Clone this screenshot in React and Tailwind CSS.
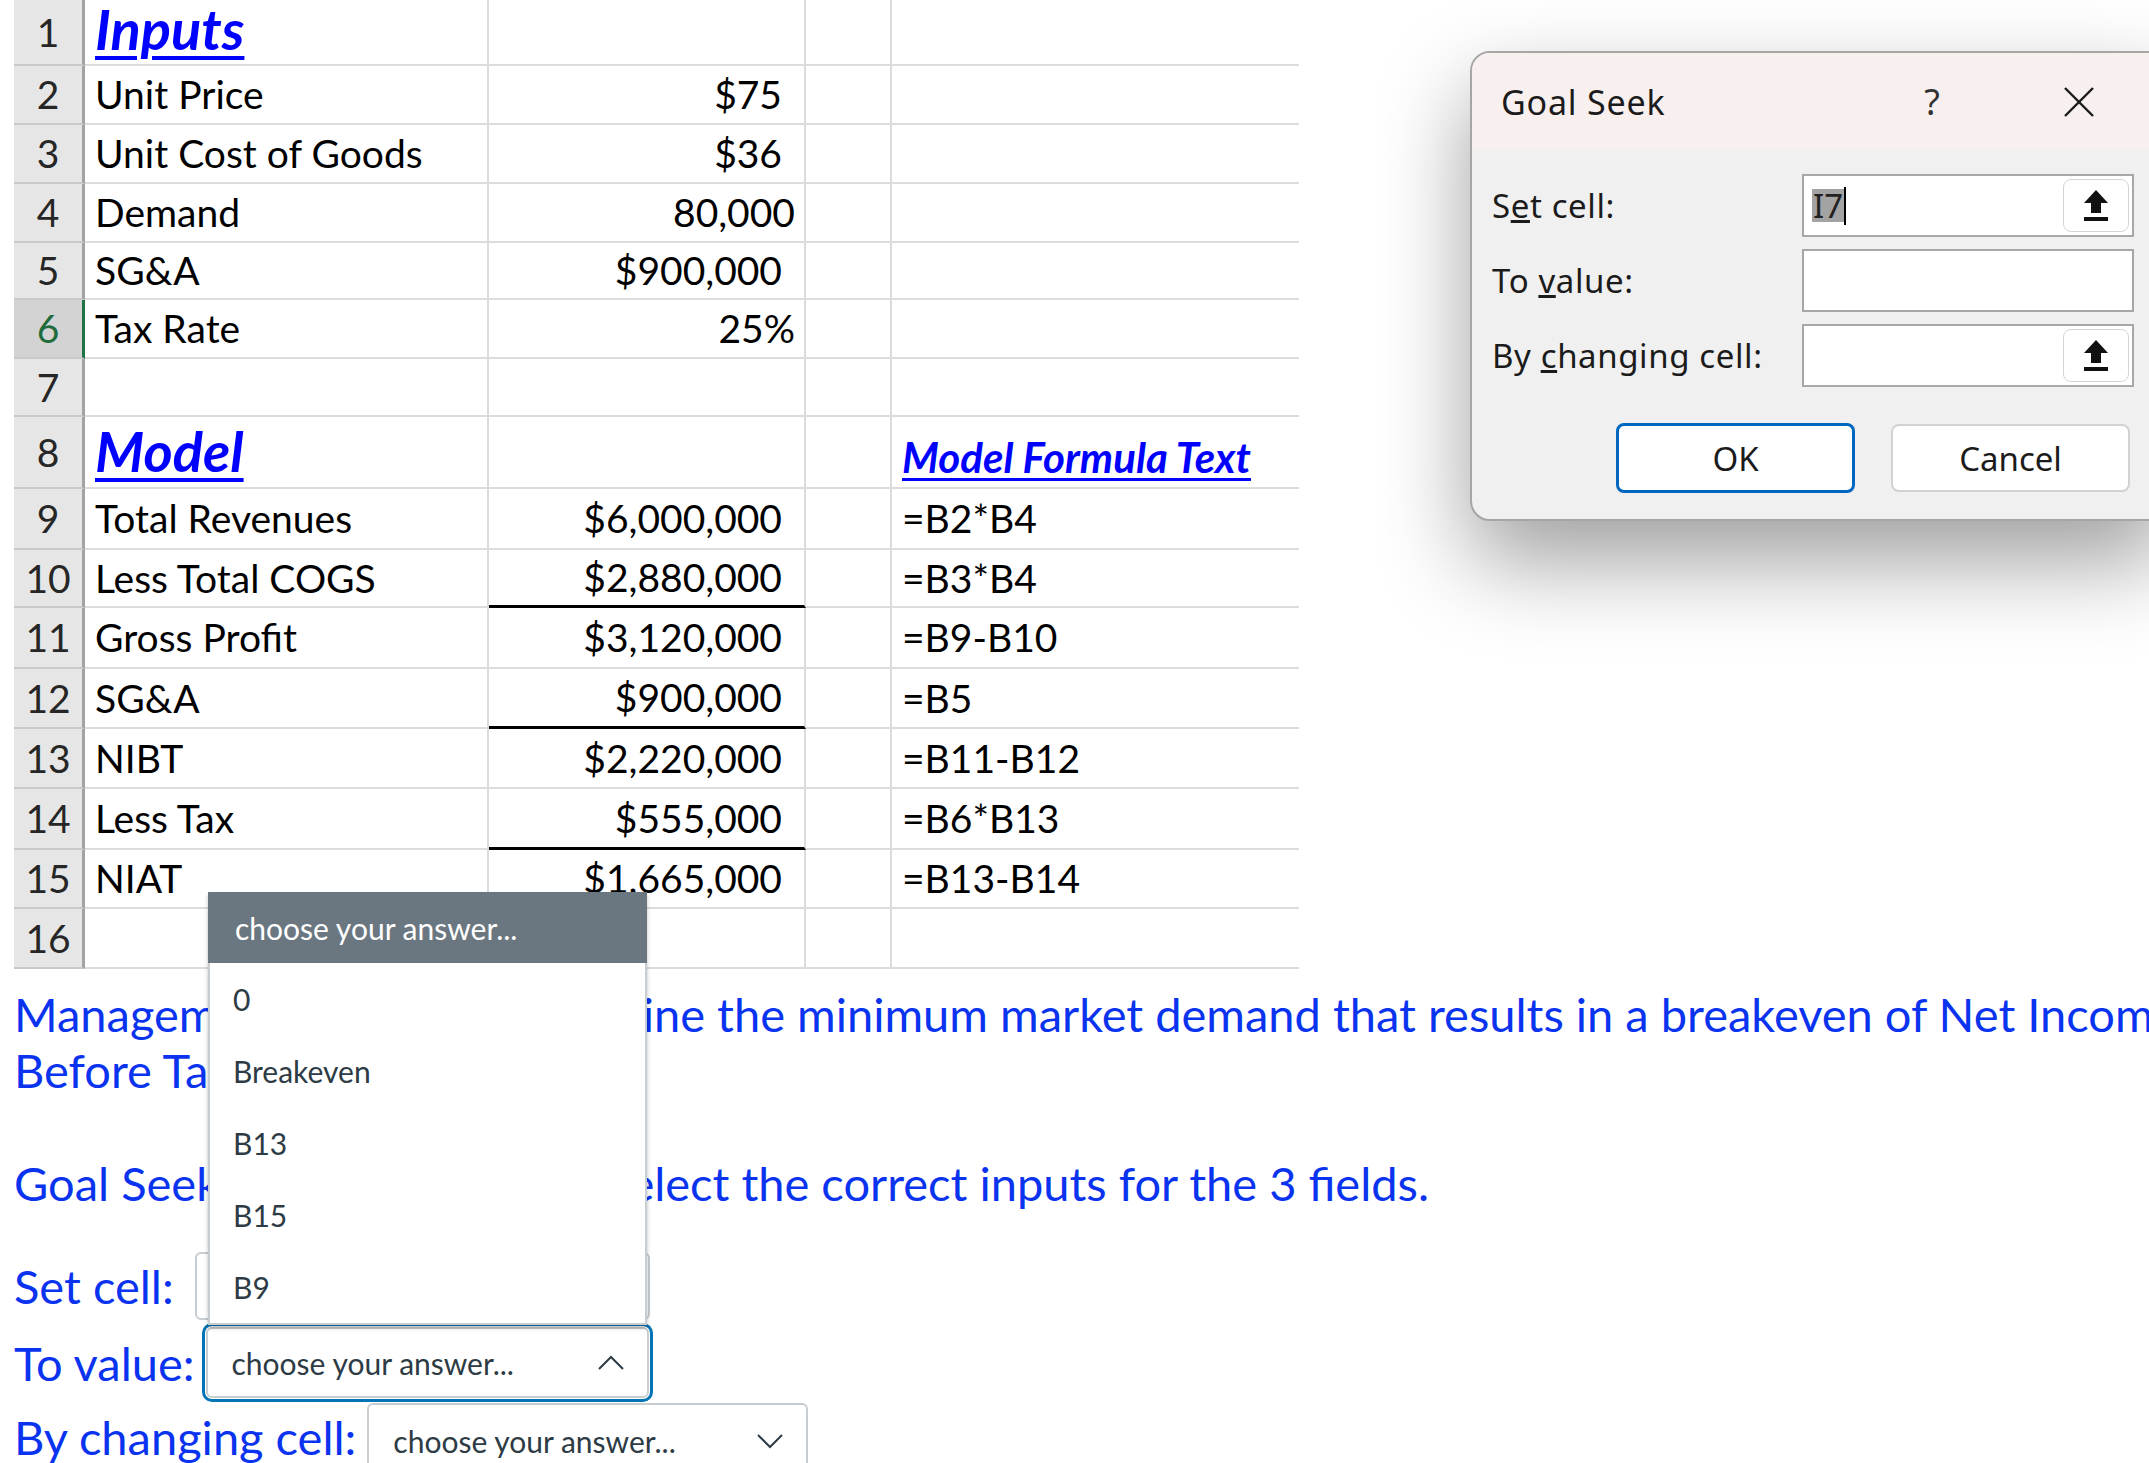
import React from "react";

const rows = [
  { n: 1, h: "h-[66px]", a: "Inputs", head: true },
  { n: 2, h: "h-[59px]", a: "Unit Price", b: "$75", acc: true },
  { n: 3, h: "h-[59px]", a: "Unit Cost of Goods", b: "$36", acc: true },
  { n: 4, h: "h-[59px]", a: "Demand", b: "80,000" },
  { n: 5, h: "h-[57px]", a: "SG&A", b: "$900,000", acc: true },
  { n: 6, h: "h-[59px]", a: "Tax Rate", b: "25%", sel: true },
  { n: 7, h: "h-[58px]" },
  { n: 8, h: "h-[72px]", a: "Model", head: true, d: "Model Formula Text", dhead: true },
  { n: 9, h: "h-[61px]", a: "Total Revenues", b: "$6,000,000", acc: true, d: "=B2*B4" },
  { n: 10, h: "h-[58px]", a: "Less Total COGS", b: "$2,880,000", acc: true, d: "=B3*B4", thick: true },
  { n: 11, h: "h-[61px]", a: "Gross Profit", b: "$3,120,000", acc: true, d: "=B9-B10" },
  { n: 12, h: "h-[60px]", a: "SG&A", b: "$900,000", acc: true, d: "=B5", thick: true },
  { n: 13, h: "h-[60px]", a: "NIBT", b: "$2,220,000", acc: true, d: "=B11-B12" },
  { n: 14, h: "h-[61px]", a: "Less Tax", b: "$555,000", acc: true, d: "=B6*B13", thick: true },
  { n: 15, h: "h-[59px]", a: "NIAT", b: "$1,665,000", acc: true, d: "=B13-B14" },
  { n: 16, h: "h-[60px]" },
];

function Sheet() {
  return (
    <div className="grid grid-cols-[71px_404px_317px_86px_407px] text-[39px] leading-none text-black">
      {rows.map((r) => (
        <React.Fragment key={r.n}>
          <div
            className={`${r.h} flex items-center justify-center border-b-2 border-b-[#c9c9c9] border-r-[3px] text-[39px] ${
              r.sel ? "bg-[#d3d3d3] text-[#1e6b3b] border-r-[#217346]" : "bg-[#e6e6e6] text-[#262626] border-r-[#a3a3a3]"
            }`}
          >
            {r.n}
          </div>
          <div
            className={`${r.h} flex border-b-2 border-r-2 border-[#dcdcdc] pl-[10px] ${
              r.head ? (r.n === 1 ? "items-start pt-[1px]" : "items-start pt-[6px]") : "items-center"
            }`}
          >
            {r.head ? (
              <span className="text-[56px] font-bold italic underline decoration-[4px] underline-offset-[6px] text-[#0000ff]">
                {r.a}
              </span>
            ) : (
              <span>{r.a}</span>
            )}
          </div>
          <div
            className={`${r.h} flex items-center justify-end border-r-2 border-r-[#dcdcdc] ${
              r.thick ? "border-b-[3px] border-b-black" : "border-b-2 border-b-[#dcdcdc]"
            } ${r.acc ? "pr-[22px]" : "pr-[9px]"}`}
          >
            {r.b}
          </div>
          <div className={`${r.h} border-b-2 border-r-2 border-[#dcdcdc]`} />
          <div
            className={`${r.h} flex border-b-2 border-[#dcdcdc] pl-[10px] ${
              r.dhead ? "items-start pt-[19px]" : "items-center"
            }`}
          >
            {r.dhead ? (
              <span className="text-[42px] font-bold italic underline decoration-[3px] underline-offset-[5px] text-[#0000ff]">
                {r.d}
              </span>
            ) : (
              <span>{r.d}</span>
            )}
          </div>
        </React.Fragment>
      ))}
    </div>
  );
}

function Chevron({ up }) {
  return (
    <svg width="28" height="16" viewBox="0 0 28 16" fill="none" stroke="#2d3b45" strokeWidth="2">
      {up ? <polyline points="2,14 14,2 26,14" /> : <polyline points="2,2 14,14 26,2" />}
    </svg>
  );
}

function SelectBox({ up, cls }) {
  return (
    <div
      className={`flex items-center justify-between rounded-[6px] border-2 border-[#c7cdd1] bg-white pl-[24px] pr-[22px] text-[30px] leading-none text-[#2d3b45] ${cls}`}
    >
      <span>choose your answer...</span>
      <Chevron up={up} />
    </div>
  );
}

function UpArrow() {
  return (
    <svg width="30" height="36" viewBox="0 0 30 36">
      <path d="M15 2 L3 15 H10 V25 H20 V15 H27 Z" fill="#111" />
      <rect x="3" y="29" width="24" height="4" fill="#111" />
    </svg>
  );
}

function RefButton() {
  return (
    <div className="my-[3px] mr-[3px] ml-auto flex w-[66px] items-center justify-center rounded-[8px] border border-[#d4d4d4] bg-white">
      <UpArrow />
    </div>
  );
}

function Dialog() {
  return (
    <div className="absolute left-[1377px] top-0 h-[720px] w-[772px] overflow-hidden">
      <div className="ml-[93px] mt-[51px] flex h-[470px] w-[700px] flex-col overflow-hidden rounded-[20px] border-2 border-[#a6a6a6] bg-[#f0f0f0] shadow-[0_40px_90px_rgba(0,0,0,0.38)] [font-family:'Noto_Sans',sans-serif] text-[33px] leading-none text-[#1b1b1b]">
        <div className="flex h-[97px] items-center bg-[#f8f0ef] pl-[29px]">
          <span className="tracking-[0.8px] text-[34px]">Goal Seek</span>
          <span className="ml-auto flex w-[40px] justify-center text-[36px] text-[#333]">?</span>
          <span className="ml-[107px] mr-[69px] flex w-[40px] justify-center">
            <svg width="32" height="32" viewBox="0 0 32 32" stroke="#1b1b1b" strokeWidth="2.4">
              <line x1="2" y1="2" x2="30" y2="30" />
              <line x1="30" y1="2" x2="2" y2="30" />
            </svg>
          </span>
        </div>
        <div className="pt-[24px] pl-[20px]">
          <div className="grid grid-cols-[310px_332px] gap-y-[12px]">
            <div className="flex h-[63px] items-center tracking-[0.6px]">
              <span>
                S<u>e</u>t cell:
              </span>
            </div>
            <div className="flex h-[63px] border-2 border-[#a7a7a7] bg-white">
              <div className="flex items-center pl-[8px]">
                <span className="bg-[#a3a3a3] px-[1px] text-[33px] text-[#222]">I7</span>
                <span className="h-[38px] w-[2px] bg-black" />
              </div>
              <RefButton />
            </div>
            <div className="flex h-[63px] items-center tracking-[0.6px]">
              <span>
                To <u>v</u>alue:
              </span>
            </div>
            <div className="h-[63px] border-2 border-[#a7a7a7] bg-white" />
            <div className="flex h-[63px] items-center tracking-[0.6px]">
              <span>
                By <u>c</u>hanging cell:
              </span>
            </div>
            <div className="flex h-[63px] border-2 border-[#a7a7a7] bg-white">
              <RefButton />
            </div>
          </div>
          <div className="mt-[36px] flex items-center gap-[36px] pl-[124px]">
            <div className="flex h-[70px] w-[239px] items-center justify-center rounded-[8px] border-[3px] border-[#0067c0] bg-white">
              OK
            </div>
            <div className="flex h-[68px] w-[239px] items-center justify-center rounded-[8px] border-2 border-[#d2d2d2] bg-white">
              Cancel
            </div>
          </div>
        </div>
      </div>
    </div>
  );
}

function DropdownList() {
  const items = ["0", "Breakeven", "B13", "B15", "B9"];
  return (
    <div className="absolute left-[208px] top-[892px] w-[439px] border-2 border-t-0 border-[#c7cdd1] bg-white text-[30px] leading-none text-[#2d3b45] shadow-[0_3px_4px_rgba(0,0,0,0.25)]">
      <div className="-mx-[2px] flex h-[71px] items-center bg-[#6b7780] pl-[27px] text-white">choose your answer...</div>
      {items.map((it) => (
        <div key={it} className="flex h-[72px] items-center pl-[23px]">
          {it}
        </div>
      ))}
    </div>
  );
}

export default function App() {
  return (
    <div className="relative h-[1463px] w-[2149px] overflow-hidden bg-white [font-family:Lato,sans-serif]">
      <div className="pl-[14px]">
        <Sheet />
      </div>
      <div className="w-[2400px] pl-[14px] text-[47px] leading-[56px] text-[#0a33ef]">
        <p className="mt-[17px]">
          Managem<span className="tracking-[-0.45px]">ent wishes to determ</span>ine the minimum market demand that results in a
          breakeven of Net Income
          <br />
          Before Taxes (NIBT).
        </p>
        <p className="mt-[57px]">Goal Seek dialog box: please select the correct inputs for the 3 fields.</p>
        <div className="mt-[39px] flex flex-col">
          <div className="flex h-[72px] items-center">
            <span>Set cell:</span>
            <SelectBox cls="ml-[21px] h-[68px] w-[455px]" />
          </div>
          <div className="flex h-[81px] items-center">
            <span>To value:</span>
            <div className="ml-[7px] h-[79px] w-[451px] rounded-[10px] border-[3px] border-[#0374b5] p-[1px]">
              <SelectBox up cls="h-full" />
            </div>
          </div>
          <div className="flex h-[76px] items-start">
            <span className="mt-[6px]">By changing cell:</span>
            <SelectBox cls="ml-[11px] h-[76px] w-[441px]" />
          </div>
        </div>
      </div>
      <Dialog />
      <DropdownList />
    </div>
  );
}
